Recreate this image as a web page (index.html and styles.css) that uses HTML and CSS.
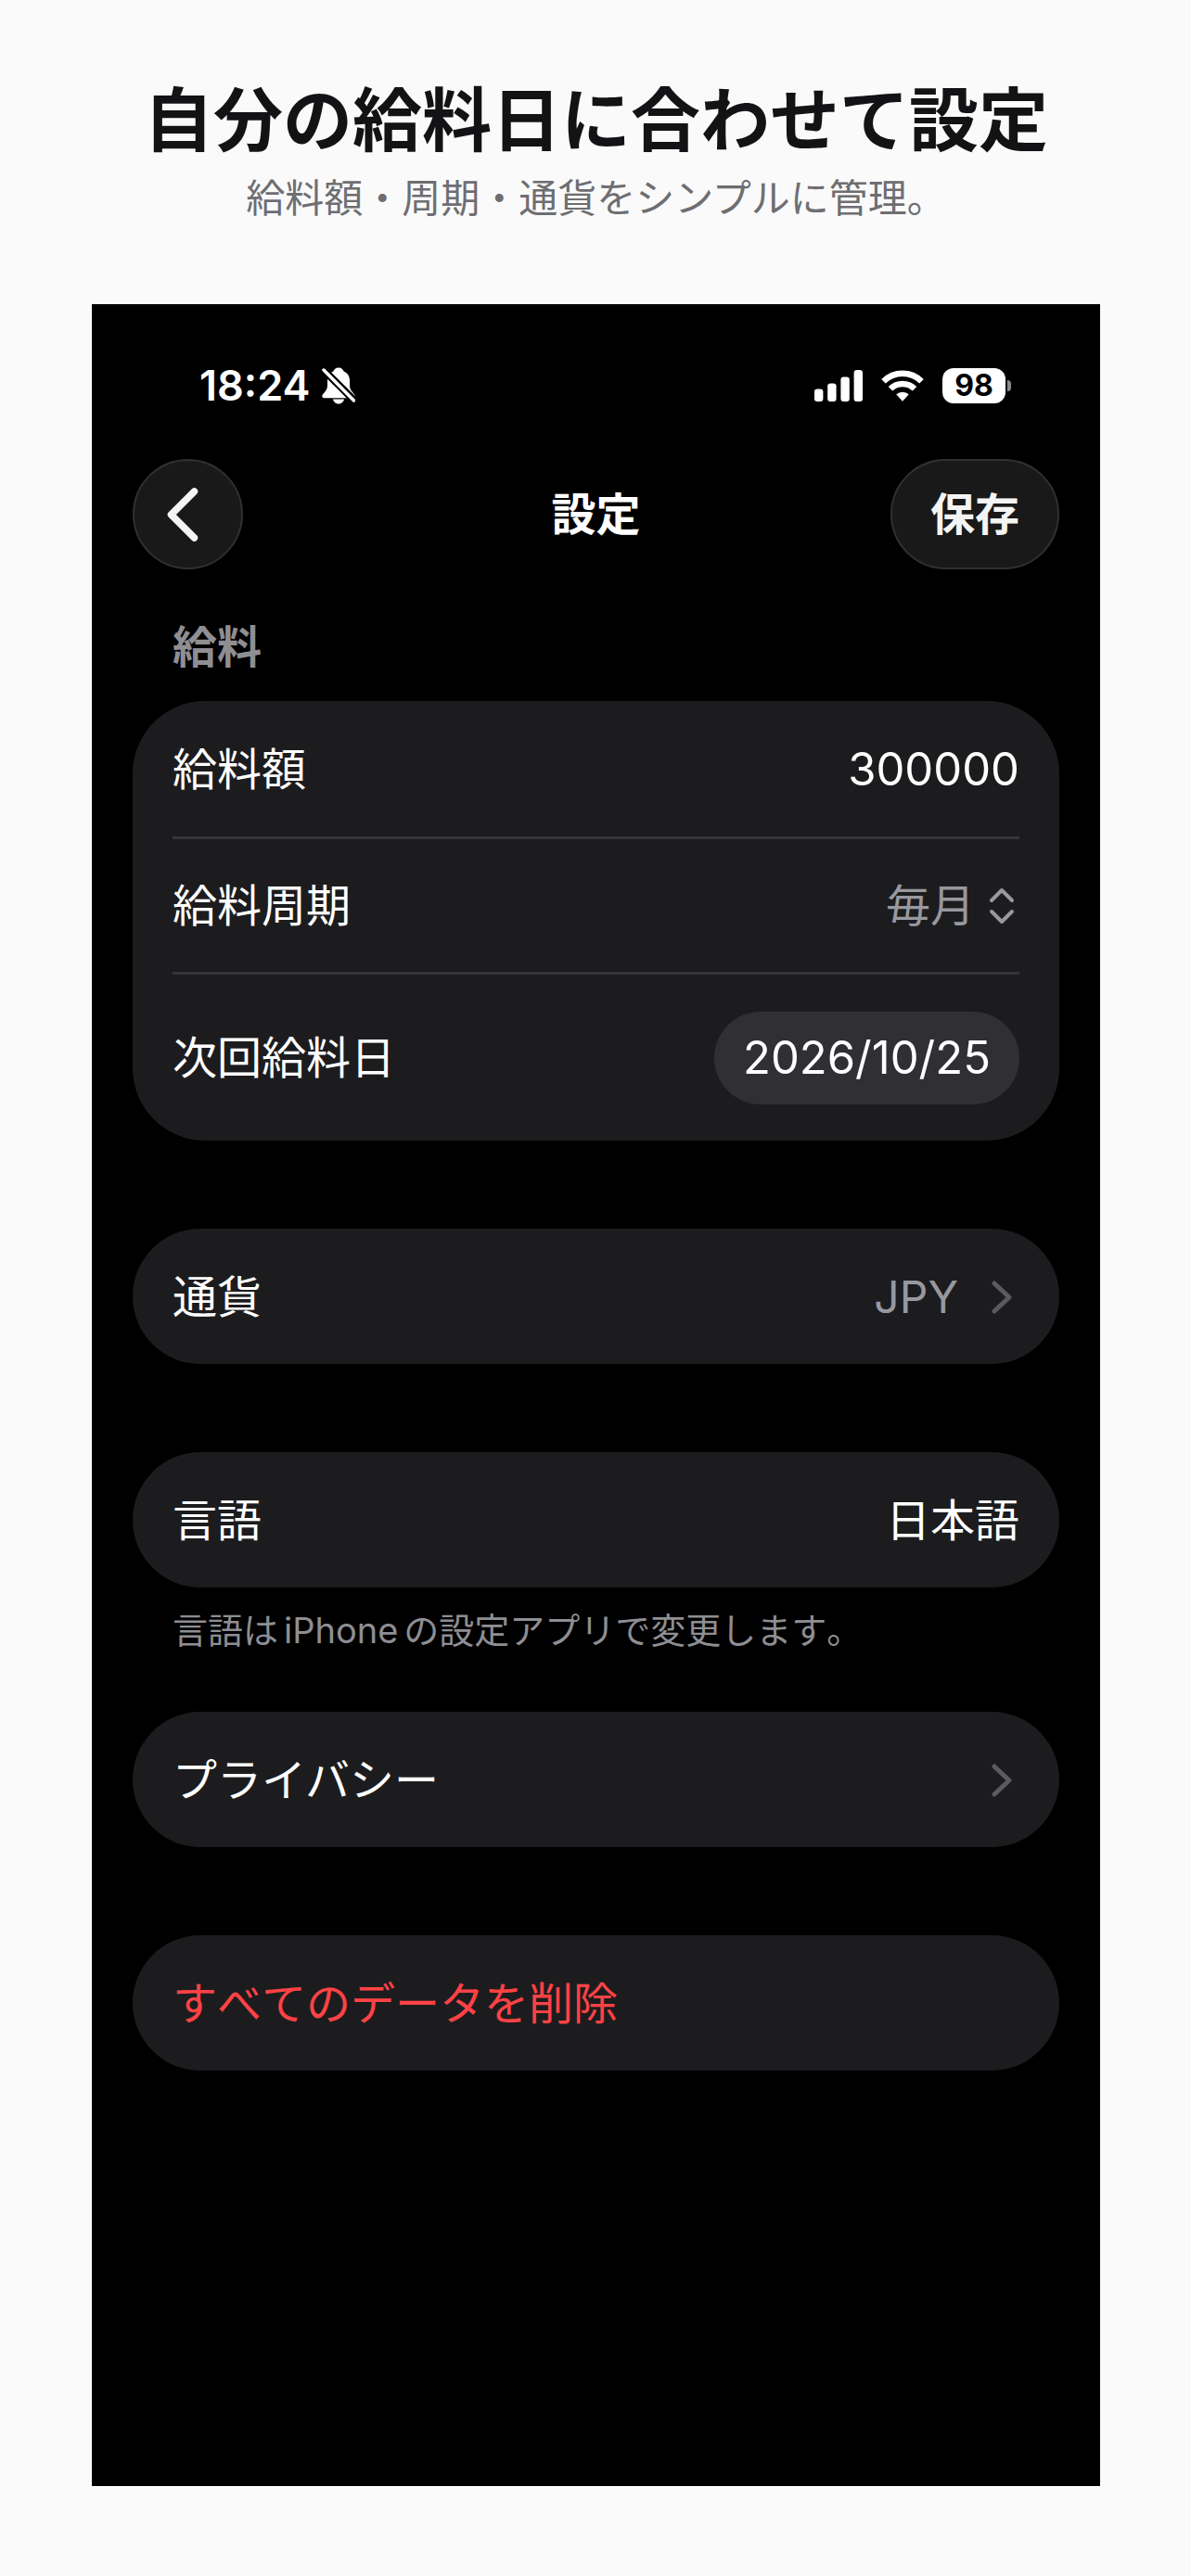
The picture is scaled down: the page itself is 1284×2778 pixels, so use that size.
FILE: index.html
```
<!DOCTYPE html>
<html lang="ja">
<head>
    <meta charset="UTF-8">
    <meta name="viewport" content="width=device-width, initial-scale=1.0">
    <title>設定</title>
    <link rel="stylesheet" href="styles.css">
</head>
<body>
    <header class="intro">
        <h1>自分の給料日に合わせて設定</h1>
        <p>給料額・周期・通貨をシンプルに管理。</p>
    </header>

    <main class="screen">
        <!-- Status bar -->
        <div class="status-bar">
            <div class="status-left">
                <span class="clock">18:24</span>
                <svg class="bell" viewBox="0 0 36 40" width="36" height="40" aria-hidden="true">
                    <path fill="#fff" d="M18 0.5c-3 0-5 1.8-5.6 4C8 6.300 6 10 6 14.500v5c0 3.500-1.500 5.500-3.500 8C1 29.300 0.300 30 0.300 31.200c0 1.200 0.900 2 2.200 2h31c1.300 0 2.200-0.800 2.200-2 0-1.200-0.700-1.900-2.200-3.700-2-2.500-3.500-4.500-3.500-8v-5c0-4.500-2-8.200-6.400-10C23 2.300 21 0.500 18 0.500z"/>
                    <path fill="#fff" d="M12 34.500h12c-0.500 2.800-3 5-6 5s-5.500-2.200-6-5z"/>
                    <path stroke="#000" stroke-width="8" d="M0 1l38 38"/>
                    <path stroke="#fff" stroke-width="3.500" stroke-linecap="round" d="M2 3l32.500 33"/>
                </svg>
            </div>
            <div class="status-right">
                <svg viewBox="0 0 52 34" width="52" height="34" fill="#fff" aria-hidden="true">
                    <rect x="0" y="20.500" width="9.400" height="13.500" rx="3"/>
                    <rect x="14.200" y="14.500" width="9.400" height="19.500" rx="3"/>
                    <rect x="28.400" y="7.500" width="9.400" height="26.500" rx="3"/>
                    <rect x="42.600" y="0" width="9.400" height="34" rx="3"/>
                </svg>
                <svg viewBox="0 0 46 34" width="46" height="34" aria-hidden="true">
                    <g fill="none" stroke="#fff" stroke-width="6.500">
                        <path d="M2.500 12.300a29 29 0 0 1 41 0"/>
                        <path d="M10 20.300a18.500 18.500 0 0 1 26 0"/>
                    </g>
                    <path fill="#fff" d="M16.200 26.300a10 10 0 0 1 13.600 0L23 33.800z"/>
                </svg>
                <div class="battery">
                    <span class="battery-level">98</span>
                    <span class="battery-tip"></span>
                </div>
            </div>
        </div>

        <!-- Navigation -->
        <nav class="nav-bar">
            <button type="button" class="glass back" aria-label="戻る">
                <svg viewBox="0 0 34 58" width="34" height="58" fill="none" stroke="currentColor" stroke-width="7.500" stroke-linecap="round" stroke-linejoin="round" aria-hidden="true">
                    <path d="M29.500 4L4.500 29l25 25"/>
                </svg>
            </button>
            <h2>設定</h2>
            <button type="submit" form="settings" class="glass save">保存</button>
        </nav>

        <form id="settings" class="settings">
            <h3>給料</h3>
            <div class="card">
                <div class="row">
                    <label for="amount">給料額</label>
                    <input class="value" id="amount" type="text" inputmode="numeric" value="300000">
                </div>
                <div class="row">
                    <label for="cycle">給料周期</label>
                    <div class="picker">
                        <select id="cycle">
                            <option>毎月</option>
                        </select>
                        <svg viewBox="0 0 28 40" width="28" height="40" fill="none" stroke="currentColor" stroke-width="4" stroke-linecap="round" stroke-linejoin="round" aria-hidden="true">
                            <path d="M3 14L14 3l11 11M3 26l11 11 11-11"/>
                        </svg>
                    </div>
                </div>
                <div class="row row-date">
                    <label for="payday">次回給料日</label>
                    <input class="date" id="payday" type="text" value="2026/10/25">
                </div>
            </div>

            <div class="card">
                <a class="row" href="#currency">
                    <span>通貨</span>
                    <span class="detail">JPY
                        <svg class="chevron" viewBox="0 0 22 38" width="22" height="38" aria-hidden="true"><path d="M3 4l16 15L3 34"/></svg>
                    </span>
                </a>
            </div>

            <div class="card">
                <div class="row">
                    <span>言語</span>
                    <span>日本語</span>
                </div>
            </div>
            <p class="note">言語は<span class="latin">iPhone</span>の設定アプリで変更します。</p>

            <div class="card">
                <a class="row" href="#privacy">
                    <span>プライバシー</span>
                    <span class="detail">
                        <svg class="chevron" viewBox="0 0 22 38" width="22" height="38" aria-hidden="true"><path d="M3 4l16 15L3 34"/></svg>
                    </span>
                </a>
            </div>

            <div class="card">
                <button type="button" class="row delete">すべてのデータを削除</button>
            </div>
        </form>
    </main>
</body>
</html>
```
FILE: styles.css
```
* {
    box-sizing: border-box;
}

body {
    margin: 0;
    padding: 86px 98px 97px 99px;
    min-height: 100vh;
    display: flex;
    flex-direction: column;
    background-color: #fafafa;
    font-family: Inter, "Noto Sans CJK JP", sans-serif;
}

h1, h2, h3, p {
    margin: 0;
}

button, input, select {
    font: inherit;
    color: inherit;
    background: none;
    border: none;
    padding: 0;
    margin: 0;
}

.intro {
    text-align: center;
    padding-bottom: 84px;
}

.intro h1 {
    font-size: 75px;
    line-height: 88px;
    font-weight: 700;
    font-kerning: none;
    color: #131315;
    white-space: nowrap;
}

.intro p {
    margin-top: 10px;
    font-size: 42px;
    line-height: 60px;
    color: #6e6e72;
}

.screen {
    flex: 1;
    padding: 60px 44px;
    background-color: #000;
    color: #fff;
    font-size: 48px;
    line-height: 72px;
}

/* Status bar */
.status-bar {
    display: flex;
    justify-content: space-between;
    align-items: center;
    height: 56px;
    padding: 0 52px 0 72px;
}

.status-left {
    display: flex;
    align-items: center;
    gap: 12px;
}

.clock {
    font-size: 45px;
    line-height: 56px;
    font-weight: 600;
}

.status-right {
    display: flex;
    align-items: center;
    gap: 20px;
}

.battery {
    display: flex;
    align-items: center;
    gap: 2px;
}

.battery-level {
    width: 68px;
    height: 38px;
    border-radius: 12px;
    background-color: #fff;
    color: #000;
    font-size: 32px;
    line-height: 38px;
    font-weight: 700;
    text-align: center;
}

.battery-tip {
    width: 4px;
    height: 12px;
    border-radius: 0 4px 4px 0;
    background-color: #8a8a8a;
}

/* Navigation */
.nav-bar {
    display: grid;
    grid-template-columns: 1fr auto 1fr;
    align-items: center;
    margin-top: 51px;
}

.nav-bar h2 {
    font-size: 48px;
    font-weight: 700;
}

.glass {
    height: 119px;
    border: 2px solid #303030;
    border-radius: 60px;
    background-color: #191919;
    color: #f4f4f4;
    font-weight: 700;
    cursor: pointer;
}

.back {
    display: flex;
    align-items: center;
    width: 119px;
    padding-left: 35px;
}

.save {
    justify-self: end;
    padding: 0 41px;
}

/* Settings list */
.settings {
    display: flex;
    flex-direction: column;
    margin-top: 48px;
}

.settings h3 {
    padding: 0 43px;
    margin-bottom: 22px;
    font-size: 48px;
    font-weight: 700;
    color: #8e8e93;
}

.card {
    padding: 0 43px;
    border-radius: 78px;
    background-color: #1c1c1e;
}

.card + .card {
    margin-top: 95px;
}

.row {
    display: flex;
    justify-content: space-between;
    align-items: center;
    width: 100%;
    height: 146px;
    padding-top: 2px;
    color: #fff;
    text-decoration: none;
}

.row + .row {
    padding-top: 0;
    border-top: 3px solid #363638;
}

.row-date {
    height: 182px;
}

.value {
    width: 400px;
    font-size: 49px;
    text-align: right;
}

.picker {
    display: flex;
    align-items: center;
    gap: 14px;
    padding-right: 5px;
    color: #98989f;
}

.picker select {
    appearance: none;
    height: 72px;
}

.date {
    width: 329px;
    height: 100px;
    border-radius: 50px;
    background-color: #302f34;
    font-size: 49px;
    text-align: center;
}

.detail {
    display: flex;
    align-items: center;
    gap: 36px;
    padding-right: 8px;
    color: #98989f;
}

.chevron {
    fill: none;
    stroke: #5a5a5f;
    stroke-width: 5;
    stroke-linecap: round;
    stroke-linejoin: round;
}

.note {
    padding: 0 43px;
    margin: 18px 0 60px;
    font-size: 38px;
    line-height: 56px;
    font-kerning: none;
    color: #8e8e93;
}

.latin {
    padding: 0 6px;
}

.delete {
    color: #ff4245;
    font-kerning: none;
    text-align: left;
    cursor: pointer;
}
```
